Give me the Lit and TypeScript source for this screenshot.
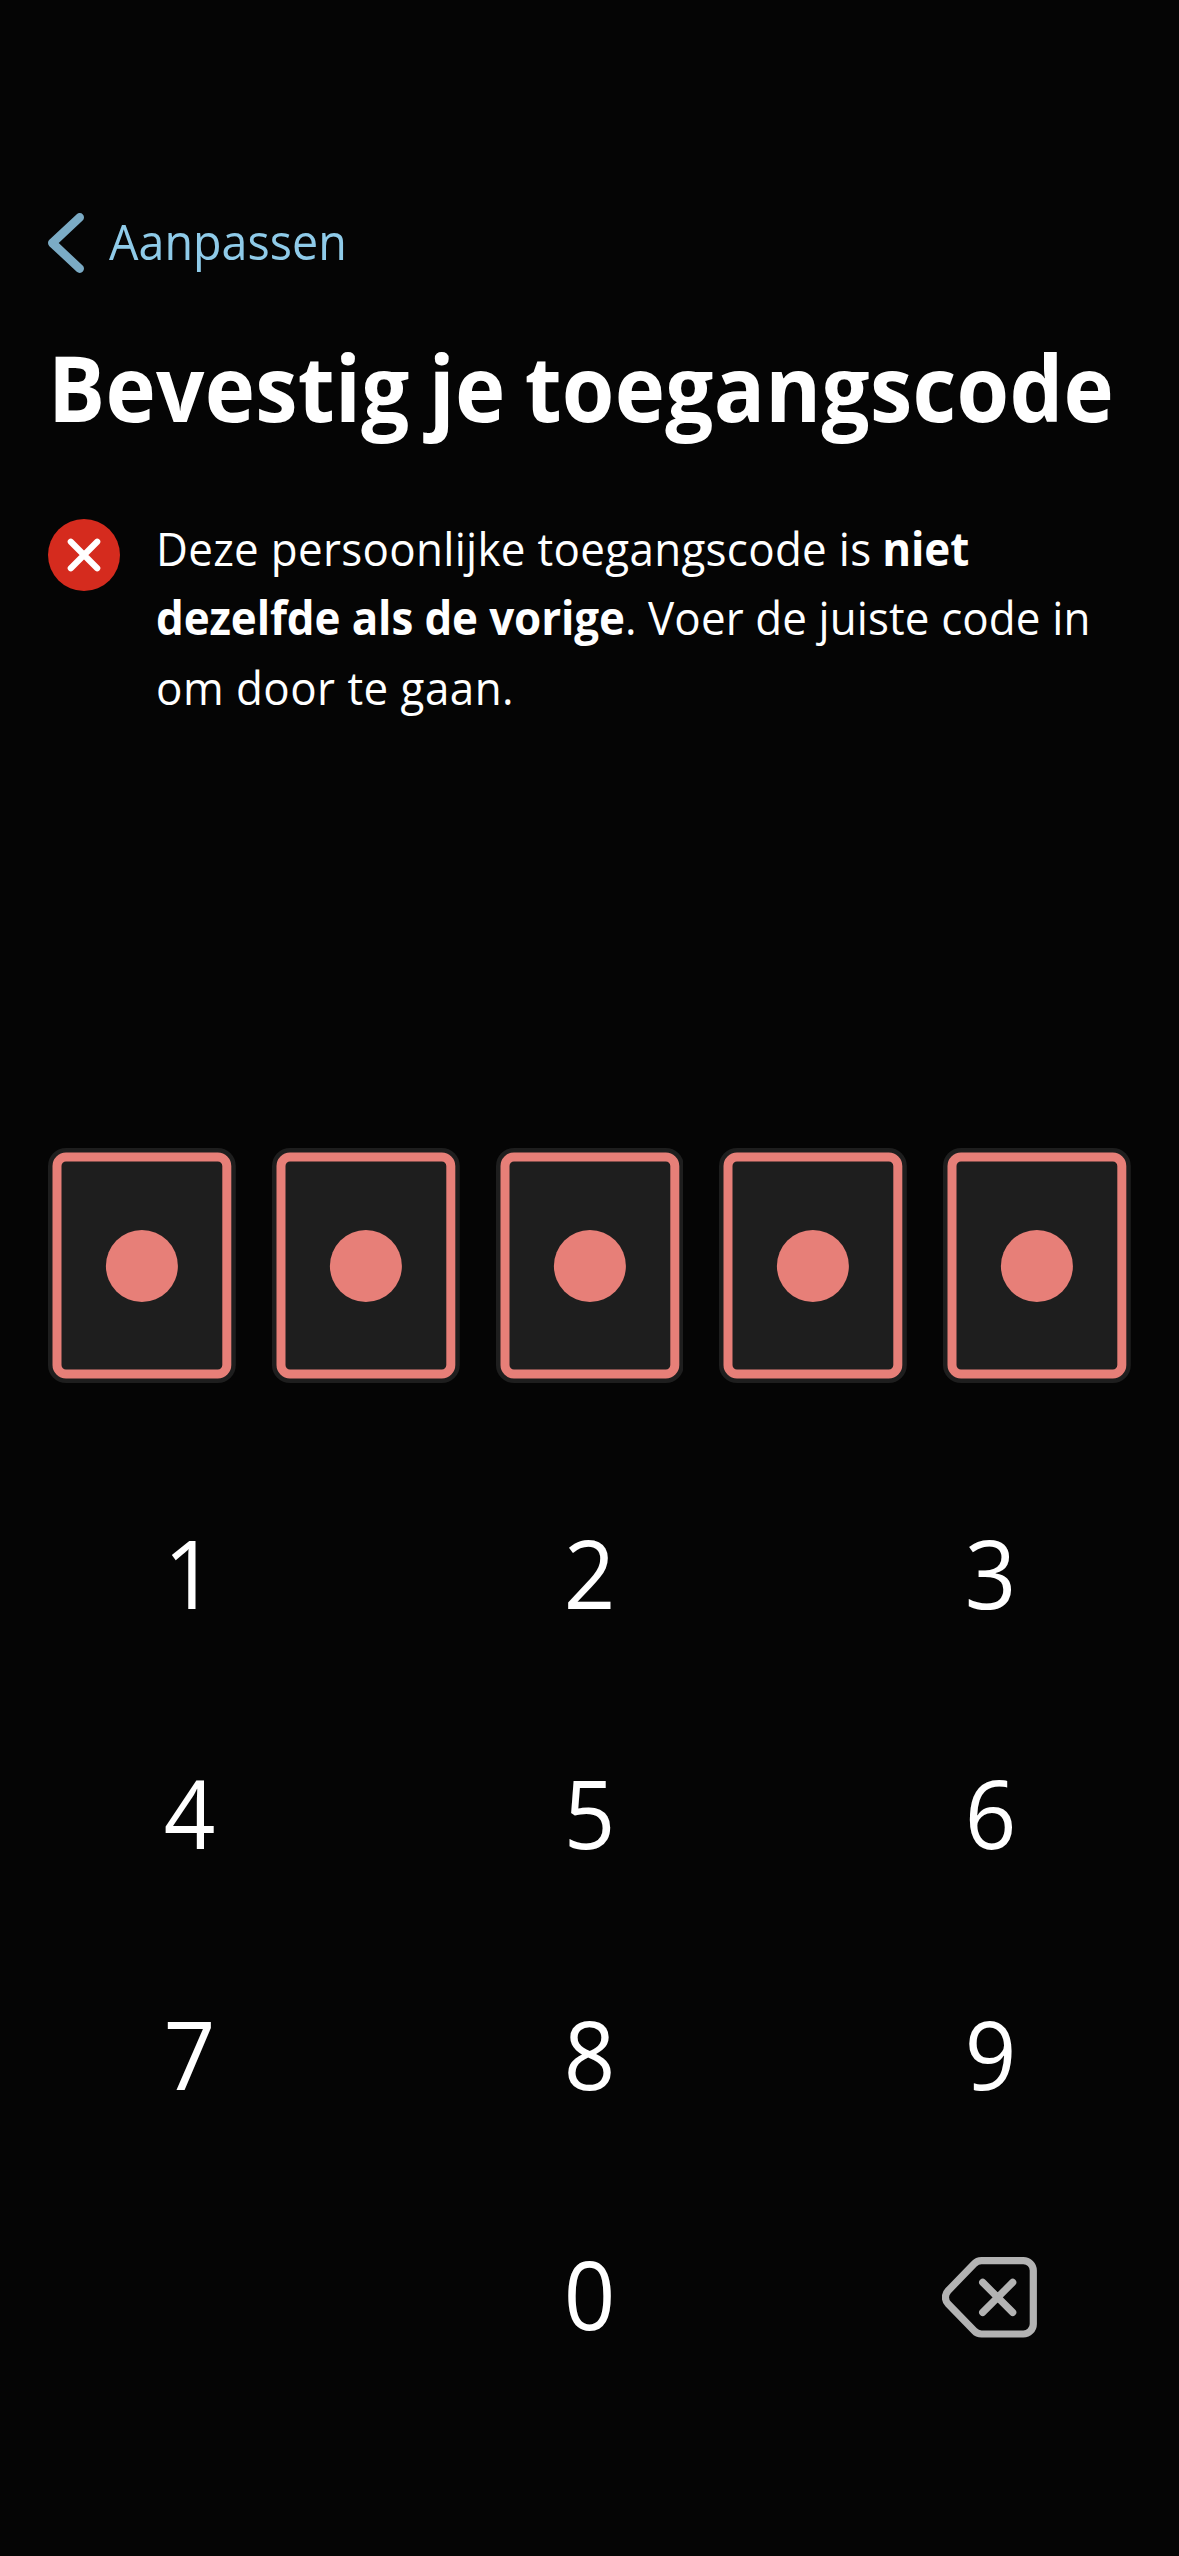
import { LitElement, html, css } from "lit";
import { customElement, property } from "lit/decorators.js";

@customElement("pin-cell")
export class PinCell extends LitElement {
  @property({ type: Boolean }) filled = false;

  static styles = css`
    :host { display: block; }
    .cell {
      display: block;
      width: 100%;
      height: 235px;
    }
    .empty .dot { visibility: hidden; }
  `;

  render() {
    return html`
      <svg class="cell ${this.filled ? "" : "empty"}" viewBox="0 0 187.8 235" preserveAspectRatio="none">
        <rect width="187.8" height="235" rx="18" fill="#1e1e1e" />
        <rect x="9" y="9" width="169.8" height="217" rx="9" fill="none" stroke="#e77f78" stroke-width="9" />
        <circle class="dot" cx="93.9" cy="118" r="36" fill="#e77f78" />
      </svg>
    `;
  }
}

@customElement("key-pad")
export class KeyPad extends LitElement {
  static styles = css`
    :host { display: block; }
    .grid {
      display: grid;
      grid-template-columns: repeat(3, 282px);
      grid-auto-rows: 240.5px;
      column-gap: 118.5px;
    }
    .key {
      display: flex;
      align-items: center;
      justify-content: center;
      padding: 3px 0 0;
      border: 0;
      background: none;
      color: #fff;
      font: 400 96px/1.36 "Open Sans", "Noto Sans", sans-serif;
    }
    .digit { transform: scaleX(0.94); }
    .erase { padding: 11px 2px 0 0; }
    .erase svg { display: block; }
  `;

  private digit(n: number) {
    return html`<button class="key"><span class="digit">${n}</span></button>`;
  }

  render() {
    return html`
      <div class="grid">
        ${[1, 2, 3, 4, 5, 6, 7, 8, 9].map((n) => this.digit(n))}
        <span></span>
        ${this.digit(0)}
        <button class="key erase">
          <svg width="95" height="81" viewBox="0 0 95 81" fill="none" stroke="#b3b3b3" stroke-width="7.2" stroke-linecap="round">
            <path d="M39.5 3.6H81.3a10 10 0 0 1 10 10V67a10 10 0 0 1-10 10H39.5a10 10 0 0 1-7.3-3.2L6.2 47a9.5 9.5 0 0 1 0-13.4L32.2 6.8A10 10 0 0 1 39.5 3.6Z" />
            <path d="M40.7 25.4l30 30M70.7 25.4l-30 30" />
          </svg>
        </button>
      </div>
    `;
  }
}

@customElement("app-root")
export class AppRoot extends LitElement {
  static styles = css`
    :host {
      display: block;
      box-sizing: border-box;
      height: 2556px;
      padding: 205.6px 48px 0;
      overflow: hidden;
      background: #050505;
      color: #fff;
      font-family: "Open Sans", "Noto Sans", sans-serif;
    }
    .back {
      display: flex;
      align-items: center;
      gap: 24px;
      height: 70px;
      color: #8fcbe9;
      font-size: 50px;
      line-height: 70px;
    }
    .chevron { display: block; margin-top: 5px; }
    .back-label { transform: scaleX(0.933); transform-origin: 0 50%; }
    .title {
      margin: 56.8px 0 71.2px;
      font-size: 91px;
      font-weight: 700;
      line-height: 110px;
      letter-spacing: 0.3px;
      word-spacing: -3.5px;
      white-space: nowrap;
      transform: scaleX(0.935);
      transform-origin: 0 50%;
    }
    .alert {
      display: flex;
      align-items: flex-start;
      gap: 36px;
      margin-bottom: 425.9px;
    }
    .alert-icon { display: block; flex: none; margin-top: 5.4px; }
    .message {
      margin: 0;
      font-size: 46px;
      line-height: 69.5px;
      white-space: nowrap;
      transform: scaleX(0.955);
      transform-origin: 0 50%;
    }
    .line { display: block; }
    .first { letter-spacing: 0.33px; }
    .second { letter-spacing: 0.12px; }
    .third { letter-spacing: 0.5px; }
    b { font-weight: 700; letter-spacing: -0.12px; }
    .first b { margin-left: -1px; }
    .cells {
      display: grid;
      grid-template-columns: repeat(5, 1fr);
      column-gap: 36px;
      margin-bottom: 67.2px;
    }
  `;

  render() {
    return html`
      <nav class="back">
        <svg class="chevron" width="37" height="60" viewBox="0 0 37 60" fill="none" stroke="#7babc5" stroke-width="8.6" stroke-linecap="round" stroke-linejoin="round">
          <path d="M31.7 4.4L4.3 30L31.7 55.6" />
        </svg>
        <span class="back-label">Aanpassen</span>
      </nav>
      <h1 class="title">Bevestig je toegangscode</h1>
      <section class="alert">
        <svg class="alert-icon" width="72" height="72" viewBox="0 0 72 72">
          <circle cx="36" cy="36" r="36" fill="#d52b1e" />
          <path d="M22.8 22.8l26.4 26.4M49.2 22.8l-26.4 26.4" stroke="#fff" stroke-width="6.2" stroke-linecap="round" />
        </svg>
        <p class="message">
          <span class="line first">Deze persoonlijke toegangscode is <b>niet</b></span>
          <span class="line second"><b>dezelfde als de vorige</b>. Voer de juiste code in</span>
          <span class="line third">om door te gaan.</span>
        </p>
      </section>
      <div class="cells">${[0, 1, 2, 3, 4].map(() => html`<pin-cell filled></pin-cell>`)}</div>
      <key-pad></key-pad>
    `;
  }
}
